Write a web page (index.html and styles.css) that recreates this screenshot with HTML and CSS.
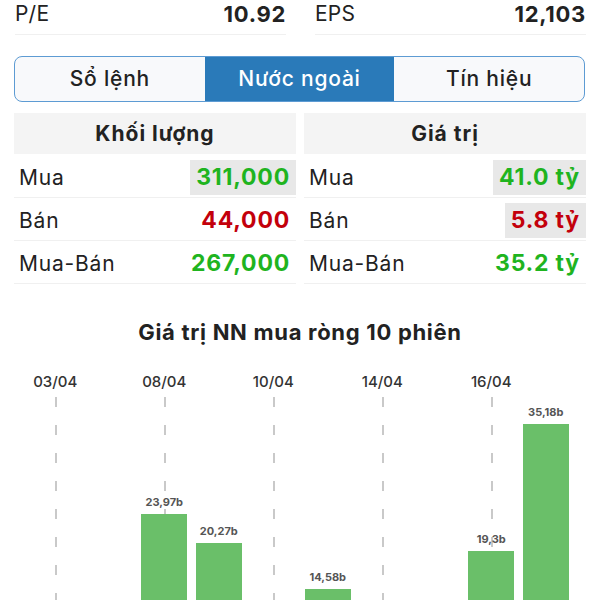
FILE: index.html
```html
<!DOCTYPE html>
<html lang="vi">
<head>
    <meta charset="UTF-8">
    <meta name="viewport" content="width=device-width, initial-scale=1.0">
    <title>Nước ngoài</title>
    <link rel="stylesheet" href="styles.css">
</head>
<body>
    <div class="stats">
        <div class="stat"><span>P/E</span><b>10.92</b></div>
        <div class="stat"><span>EPS</span><b>12,103</b></div>
    </div>

    <div class="tabs">
        <div class="tab">Sổ lệnh</div>
        <div class="tab active">Nước ngoài</div>
        <div class="tab">Tín hiệu</div>
    </div>

    <div class="tables">
        <div class="table">
            <div class="thead">Khối lượng</div>
            <div class="row"><span class="label">Mua</span><span class="value up flash">311,000</span></div>
            <div class="row"><span class="label">Bán</span><span class="value down">44,000</span></div>
            <div class="row"><span class="label">Mua-Bán</span><span class="value up">267,000</span></div>
        </div>
        <div class="table">
            <div class="thead">Giá trị</div>
            <div class="row"><span class="label">Mua</span><span class="value up flash">41.0 tỷ</span></div>
            <div class="row"><span class="label">Bán</span><span class="value down flash">5.8 tỷ</span></div>
            <div class="row"><span class="label">Mua-Bán</span><span class="value up">35.2 tỷ</span></div>
        </div>
    </div>

    <h2 class="chart-title">Giá trị NN mua ròng 10 phiên</h2>

    <div class="chart">
        <div class="slot tick"><div class="date">03/04</div><div class="plot"></div></div>
        <div class="slot"><div class="date"></div><div class="plot"></div></div>
        <div class="slot tick"><div class="date">08/04</div><div class="plot"><div class="bar-label">23,97b</div><div class="bar" style="height: 192px"></div></div></div>
        <div class="slot"><div class="date"></div><div class="plot"><div class="bar-label">20,27b</div><div class="bar" style="height: 163px"></div></div></div>
        <div class="slot tick"><div class="date">10/04</div><div class="plot"></div></div>
        <div class="slot"><div class="date"></div><div class="plot"><div class="bar-label">14,58b</div><div class="bar" style="height: 117px"></div></div></div>
        <div class="slot tick"><div class="date">14/04</div><div class="plot"></div></div>
        <div class="slot"><div class="date"></div><div class="plot"></div></div>
        <div class="slot tick"><div class="date">16/04</div><div class="plot"><div class="bar-label">19,3b</div><div class="bar" style="height: 155px"></div></div></div>
        <div class="slot"><div class="date"></div><div class="plot"><div class="bar-label">35,18b</div><div class="bar" style="height: 282px"></div></div></div>
    </div>
</body>
</html>
```

FILE: styles.css
```css
body {
    font-family: 'Inter', 'Roboto', sans-serif;
    background-color: #fff;
    color: #222;
    margin: 0;
    padding: 0;
    letter-spacing: 0.8px;
}
.stats {
    display: grid;
    grid-template-columns: 1fr 1fr;
    column-gap: 29px;
    padding: 0 14px 0 15px;
}
.stat {
    display: flex;
    justify-content: space-between;
    line-height: 28px;
    padding-bottom: 6px;
    border-bottom: 1px solid #f0f0f0;
    font-size: 21px;
    letter-spacing: 0.2px;
}
.stat b {
    font-size: 22px;
    letter-spacing: 0.7px;
}
.tabs {
    display: grid;
    grid-template-columns: 1fr 1fr 1fr;
    margin: 21px 15px 0 14px;
    border: 1.5px solid #5d9bd3;
    border-radius: 8px;
    overflow: hidden;
    background: #f8f9fb;
}
.tab {
    text-align: center;
    line-height: 44px;
    font-size: 21px;
    font-weight: 500;
    color: #222;
}
.tab.active {
    background-color: #2a7ab9;
    color: white;
}
.tables {
    display: grid;
    grid-template-columns: 1fr 1fr;
    column-gap: 8px;
    margin-top: 11px;
    padding: 0 14px;
}
.thead {
    background-color: #f4f4f4;
    line-height: 41px;
    text-align: center;
    font-size: 21px;
    font-weight: 700;
    letter-spacing: 1px;
    margin-bottom: 1px;
}
.row {
    display: flex;
    justify-content: space-between;
    align-items: center;
    padding: 5px 0 2px;
    border-bottom: 1px solid #f0f0f0;
}
.label {
    padding-left: 5px;
    font-size: 21px;
}
.value {
    line-height: 35px;
    padding: 0 6px;
    font-size: 23px;
    font-weight: 700;
}
.flash {
    background-color: #e8e8e8;
}
.up {
    color: #1fb41f;
}
.down {
    color: #c3000b;
}
.chart-title {
    margin: 36px 0 0;
    text-align: center;
    font-size: 22px;
    line-height: 24px;
    font-weight: 700;
    letter-spacing: 0.7px;
}
.chart {
    display: flex;
    width: 545px;
    margin: 29px 0 0 28px;
    letter-spacing: 0;
}
.slot {
    flex: 1;
    display: flex;
    flex-direction: column;
    align-items: center;
}
.date {
    height: 18px;
    line-height: 18px;
    margin-bottom: 6px;
    font-size: 15px;
    font-weight: 500;
    color: #333;
}
.plot {
    height: 309px;
    align-self: stretch;
    display: flex;
    flex-direction: column;
    justify-content: flex-end;
    align-items: center;
}
.tick .plot {
    background: linear-gradient(#c9c9c9 10px, transparent 10px) center top / 1.5px 28px repeat-y;
}
.bar-label {
    font-size: 11px;
    line-height: 13px;
    font-weight: 700;
    color: #555;
    margin-bottom: 5px;
}
.bar {
    width: 46px;
    background-color: #6abf69;
}
```
